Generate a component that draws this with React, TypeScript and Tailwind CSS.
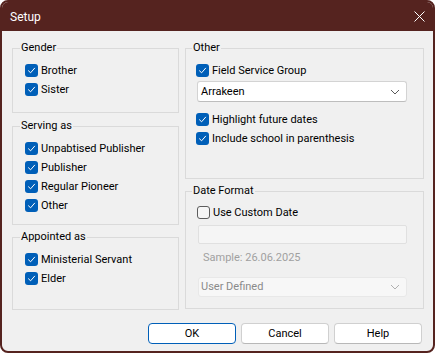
import React from "react";

const Check = ({ checked = true }: { checked?: boolean }) =>
  checked ? (
    <span className="flex h-[13px] w-[13px] shrink-0 items-center justify-center rounded-[3px] bg-[#005fb8]">
      <svg width="9" height="9" viewBox="0 0 9 9" fill="none">
        <path d="M1.5 4.8 L3.6 6.8 L7.6 2.2" stroke="#ffffff" strokeWidth="1" strokeLinecap="round" strokeLinejoin="round" />
      </svg>
    </span>
  ) : (
    <span className="h-[13px] w-[13px] shrink-0 rounded-[3px] border border-[#5d5d5d] bg-[#f6f6f6]" />
  );

const Row = ({ label, checked = true }: { label: string; checked?: boolean }) => (
  <div className="flex h-[19px] items-center gap-[3px]">
    <Check checked={checked} />
    <span className="leading-[16px]">{label}</span>
  </div>
);

const Group = ({
  title,
  className,
  legendClass,
  children,
}: {
  title: string;
  className: string;
  legendClass: string;
  children: React.ReactNode;
}) => (
  <fieldset className={`border border-[#dadada] ${className}`}>
    <legend className={`px-[1px] leading-[16px] ${legendClass}`}>{title}</legend>
    {children}
  </fieldset>
);

const Chevron = ({ color }: { color: string }) => (
  <svg width="10" height="6" viewBox="0 0 10 6" fill="none">
    <path d="M1 1 L5 5 L9 1" stroke={color} strokeWidth="1" />
  </svg>
);

export default function App() {
  return (
    <div
      className="h-[354px] w-[436px] bg-white text-[11px] text-black"
      style={{ fontFamily: 'Roboto, "Liberation Sans", sans-serif' }}
    >
      <div className="flex h-[353px] w-[435px] flex-col overflow-hidden rounded-[8px] border-2 border-[#55231f] bg-[#f0f0f0]">
        <div className="flex h-[29px] shrink-0 items-center justify-between bg-[#55231f] pl-[8px] pr-[8px] text-[12px] text-white">
          <span className="pt-[1px]">Setup</span>
          <svg width="11" height="11" viewBox="0 0 11 11" fill="none">
            <path d="M0.5 0.5 L10.5 10.5 M10.5 0.5 L0.5 10.5" stroke="#ffffff" strokeWidth="1" />
          </svg>
        </div>
        <div className="flex gap-[6px] pl-[10px] pt-[9px]">
          <div className="flex w-[167px] flex-col">
            <Group title="Gender" legendClass="ml-[-5px]" className="h-[73px] pl-[12px] pt-[5px]">
              <Row label="Brother" />
              <Row label="Sister" />
            </Group>
            <Group title="Serving as" legendClass="ml-[-5px]" className="mt-[5px] h-[107px] pl-[12px] pt-[5px]">
              <Row label="Unpabtised Publisher" />
              <Row label="Publisher" />
              <Row label="Regular Pioneer" />
              <Row label="Other" />
            </Group>
            <Group title="Appointed as" legendClass="ml-[-5px]" className="mt-[4px] h-[81px] pl-[12px] pt-[5px]">
              <Row label="Ministerial Servant" />
              <Row label="Elder" />
            </Group>
          </div>
          <div className="flex w-[239px] flex-col">
            <Group title="Other" legendClass="ml-[-4px]" className="h-[139px] pl-[10px] pr-[16px] pt-[5px]">
              <Row label="Field Service Group" />
              <div className="ml-[1px] mt-[1px] flex h-[21px] items-center justify-between rounded-[3px] border border-[#d3d3d3] border-b-[#bdbdbd] bg-white pl-[3px] pr-[6px]">
                <span className="leading-[16px]">Arrakeen</span>
                <Chevron color="#5a5a5a" />
              </div>
              <div className="mt-[8px]">
                <Row label="Highlight future dates" />
                <Row label="Include school in parenthesis" />
              </div>
            </Group>
            <Group title="Date Format" legendClass="ml-[-5px]" className="mt-[4px] h-[126px] pl-[11px] pr-[16px] pt-[4px]">
              <Row label="Use Custom Date" checked={false} />
              <div className="ml-[1px] mt-[3px] h-[19px] rounded-[2px] border border-[#e0e0e0] bg-[#f5f5f5]" />
              <div className="ml-[6px] mt-[6px] leading-[16px] text-[#a0a0a0]">Sample: 26.06.2025</div>
              <div className="ml-[1px] mt-[11px] flex h-[20px] items-center justify-between rounded-[3px] border border-[#e8e8e8] bg-[#f7f7f7] pl-[2px] pr-[6px] text-[#8a8a8a]">
                <span className="leading-[16px]">User Defined</span>
                <Chevron color="#b0b0b0" />
              </div>
            </Group>
          </div>
        </div>
        <div className="flex justify-end gap-[5px] pr-[11px] pt-[13px]">
          <button className="h-[21px] w-[88px] rounded-[4px] border border-[#005fb8] bg-white leading-[16px]">OK</button>
          <button className="h-[21px] w-[88px] rounded-[4px] border border-[#d0d0d0] border-b-[#b8b8b8] bg-white leading-[16px]">Cancel</button>
          <button className="h-[21px] w-[88px] rounded-[4px] border border-[#d0d0d0] border-b-[#b8b8b8] bg-white leading-[16px]">Help</button>
        </div>
      </div>
    </div>
  );
}
